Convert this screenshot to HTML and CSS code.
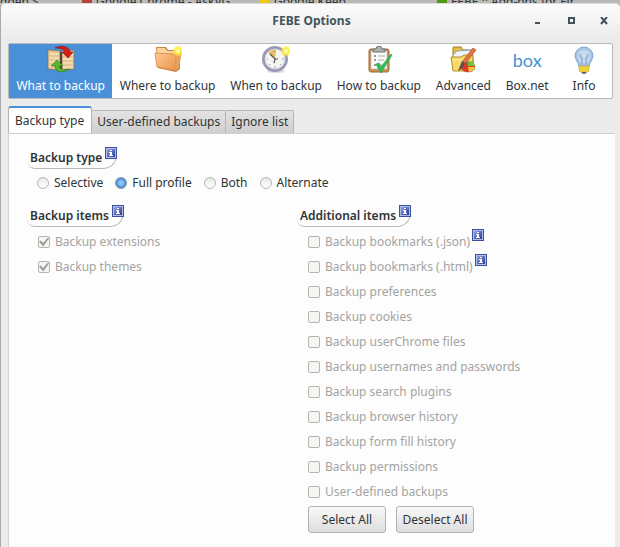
FILE: index.html
```html
<!DOCTYPE html>
<html lang="en">
<head>
<meta charset="utf-8">
<title>FEBE Options</title>
<link rel="stylesheet" href="styles.css">
</head>
<body>
<svg width="0" height="0" class="defs" aria-hidden="true">
  <defs>
    <linearGradient id="folder" x1="0" y1="0" x2="1" y2="1"><stop offset="0" stop-color="#ffc98c"/><stop offset="1" stop-color="#e8924a"/></linearGradient>
    <linearGradient id="blue" x1="0" y1="0" x2="1" y2="1"><stop offset="0" stop-color="#8fa3dc"/><stop offset="1" stop-color="#263a92"/></linearGradient>
    <radialGradient id="spark"><stop offset="0" stop-color="#fffde0"/><stop offset=".5" stop-color="#fbee3c"/><stop offset="1" stop-color="#fbe83c" stop-opacity="0"/></radialGradient>
    <symbol id="info" viewBox="0 0 12 12">
      <rect width="12" height="12" fill="#3b4fa4"/><rect x="1" y="1" width="10" height="10" fill="#b4bee4"/><rect x="2" y="2" width="8" height="8" fill="url(#blue)"/>
      <path d="M5 3h2v1H5zM5 5h2v3h1v1H4V8h1V6H4V5z" fill="#fff"/>
    </symbol>
  </defs>
</svg>
<div class="browser-tabs" aria-hidden="true">
  <span>dden S</span><span><b class="mark red"></b>Google Chrome - AskVG</span><span><b class="mark yellow"></b>Google Keep</span><span><b class="mark green"></b>FEBE :: Add-ons for Fir</span>
</div>
<main class="window">
  <header class="titlebar">
    <h1>FEBE Options</h1>
    <div class="controls">
      <button aria-label="Minimize"><svg viewBox="0 0 8 8"><path d="M1 5h5v2H1z"/></svg></button>
      <button aria-label="Maximize"><svg viewBox="0 0 8 8"><path fill-rule="evenodd" d="M1 0h7v7H1zM3 2v3h3V2z"/></svg></button>
      <button aria-label="Close"><svg viewBox="0 0 8 8"><path d="M1 0l6 7M7 0L1 7" stroke="#41545c" stroke-width="2"/></svg></button>
    </div>
  </header>
  <nav class="toolbar">
    <button class="active"><svg viewBox="0 0 28 28"><path d="M1 4l12 1v19L1 23zM15 5l12-1v19l-12 1z" fill="#e5c794" stroke="#8a6440" stroke-width=".6"/><path d="M2 8h10M2 12h10M2 16h10M2 20h8M16 9h10M16 13h10M16 17h10M16 21h10" stroke="#fff0c8"/><path d="M14 6v17" stroke="#4a2b1c" stroke-width="1.4"/><path d="M8 2C14-1 22 0 23 6h3l-5 6-6-6h3C17 3 13 2 8 2z" fill="#d91c16" stroke="#84100d" stroke-width=".6"/><path d="M22 23C16 28 8 26 8 20H4l6-6 6 6h-4c0 3 5 5 10 3z" fill="#58ba2b" stroke="#26741a" stroke-width=".6"/></svg>What to backup</button>
    <button><svg viewBox="0 0 28 28"><path d="M2 2q0-1 1-1h9l2 3h12v19l-4 3L4 22z" fill="#c98045"/><path d="M3 2h8l2 3h12v16H4z" fill="#ffd39d"/><path d="M1 7l19 1q2 0 2 2l-1 15L3 21z" fill="url(#folder)" stroke="#ce7c38" stroke-width=".7"/><path d="M22 9l6-4-3 17-4 3z" fill="#e6a05c"/><circle cx="24" cy="5" r="6" fill="url(#spark)"/></svg>Where to backup</button>
    <button><svg viewBox="0 0 28 28"><ellipse cx="14" cy="25" rx="9" ry="2" fill="#ddd"/><circle cx="13" cy="13" r="11.5" fill="#f4f4f2" stroke="#9a98b4" stroke-width="3"/><circle cx="13" cy="13" r="10" fill="none" stroke="#d2d1df"/><path d="M13 13L6 7q4-4 8-3z" fill="#e8bd61"/><path d="M13 5v1M13 20v2M5 13h1M20 13h2M18 18l1 1M7 19l1-1" stroke="#999"/><path d="M8 8l5 5h3M13 13l-1 4" fill="none" stroke="#555" stroke-width="1.2"/><circle cx="24" cy="5" r="6" fill="url(#spark)"/></svg>When to backup</button>
    <button><svg viewBox="0 0 28 28"><rect x="4" y="3" width="20" height="23" rx="2" fill="#cf9352" stroke="#9d6935"/><path d="M6 5h16v18H6z" fill="#fafafa" stroke="#aaa" stroke-width=".5"/><path d="M8 6V3h3q0-3 3-3t3 3h3v3z" fill="#aeb2ad" stroke="#757976"/><path d="M9 9h2v2H9zM9 13h2v2H9zM9 18h2v2H9z" fill="#999"/><path d="M13 10h7M13 14h6M13 19h5" stroke="#aaa"/><path d="M11 18l3-1 2 4L26 8l1 1-11 18q-3-4-5-9z" fill="#32bc55" stroke="#20a044" stroke-width=".6"/></svg>How to backup</button>
    <button><svg viewBox="0 0 28 28"><path d="M4 2q0-1 1-1h7l2 3h9v11H4z" fill="#e6bd3e" stroke="#9b7b28"/><path d="M4 9l4-4 15-1 2 15H5z" fill="#eef4fa" stroke="#91a5ba"/><path d="M2 11h10l3-2h9l-1 16H4z" fill="#f7d765" stroke="#b69235"/><path d="M4 14h15" stroke="#fff0a6"/><ellipse cx="19" cy="21" rx="7" ry="5" fill="#e03b29" stroke="#a33a22" stroke-width=".5"/><path d="M19 20v-5q6 0 7 5z" fill="#70c442"/><path d="M19 21h7q-1 4-6 5z" fill="#efc936"/><path d="M24 2l3 2-11 14-3-2z" fill="#e27443" stroke="#a54626" stroke-width=".6"/><path d="M13 15l3 2q-2 6-7 8 2-5 4-10z" fill="#5c5050"/></svg>Advanced</button>
    <button><span class="box-logo">box</span>Box.net</button>
    <button><svg viewBox="0 0 28 28"><path d="M14 1a9 9 0 0 0-9 9c0 4 4 6 4 11h10c0-5 4-7 4-11a9 9 0 0 0-9-9z" fill="#a9c5e4" stroke="#80a2cc"/><path d="M8 10q0-6 6-6 6 0 6 6 0 4-3 7h-6q-3-3-3-7z" fill="#c7dcf0"/><path d="M12 20v-8q-3-2-1-4M16 20v-8q3-2 1-4" fill="none" stroke="#8fabd0" stroke-width="1.5"/><path d="M9 20h10v4q0 2-2 2h-6q-2 0-2-2z" fill="#f0cf3c" stroke="#c3a12c" stroke-width=".5"/><path d="M11 26h6l-2 2h-2z" fill="#666"/></svg>Info</button>
  </nav>
  <div class="tabs" role="tablist">
    <button role="tab" class="selected" aria-selected="true">Backup type</button><button role="tab" aria-selected="false">User-defined backups</button><button role="tab" aria-selected="false">Ignore list</button>
  </div>
  <section class="panel">
    <h2>Backup type <svg class="info"><use href="#info"/></svg></h2>
    <div class="radios">
      <label><input type="radio" name="type">Selective</label>
      <label><input type="radio" name="type" checked>Full profile</label>
      <label><input type="radio" name="type">Both</label>
      <label><input type="radio" name="type">Alternate</label>
    </div>
    <div class="columns">
      <div>
        <h2>Backup items <svg class="info"><use href="#info"/></svg></h2>
        <div class="checks">
          <label><input type="checkbox" checked disabled>Backup extensions</label>
          <label><input type="checkbox" checked disabled>Backup themes</label>
        </div>
      </div>
      <div>
        <h2>Additional items <svg class="info"><use href="#info"/></svg></h2>
        <div class="checks">
          <label><input type="checkbox" disabled>Backup bookmarks (.json)<svg class="info"><use href="#info"/></svg></label>
          <label><input type="checkbox" disabled>Backup bookmarks (.html)<svg class="info"><use href="#info"/></svg></label>
          <label><input type="checkbox" disabled>Backup preferences</label>
          <label><input type="checkbox" disabled>Backup cookies</label>
          <label><input type="checkbox" disabled>Backup userChrome files</label>
          <label><input type="checkbox" disabled>Backup usernames and passwords</label>
          <label><input type="checkbox" disabled>Backup search plugins</label>
          <label><input type="checkbox" disabled>Backup browser history</label>
          <label><input type="checkbox" disabled>Backup form fill history</label>
          <label><input type="checkbox" disabled>Backup permissions</label>
          <label><input type="checkbox" disabled>User-defined backups</label>
        </div>
        <div class="actions"><button>Select All</button><button>Deselect All</button></div>
      </div>
    </div>
  </section>
</main>
</body>
</html>
```
FILE: styles.css
```css
* { box-sizing: border-box; }
html { height: 100%; }
body {
  margin: 0;
  min-height: 100%;
  display: flex;
  flex-direction: column;
  background: #b9b9b7;
  color: #2e3436;
  font: 12px/16px "Noto Sans", "Open Sans", sans-serif;
}
button { margin: 0; padding: 0; border: 0; background: none; color: inherit; font: inherit; white-space: nowrap; }
.defs { position: absolute; }

.browser-tabs {
  display: grid;
  grid-template: 100% / 75px 178px 177px 1fr;
  align-items: center;
  height: 3px;
  overflow: hidden;
  white-space: nowrap;
  line-height: 12px;
}
.browser-tabs span { display: flex; align-items: center; gap: 4px; padding-left: 7px; }
.browser-tabs span:first-child { padding-left: 0; }
.mark { width: 10px; height: 10px; }
.red { background: #b5443f; }
.yellow { background: #eecb0c; }
.green { background: #4c9b10; }

.window {
  flex: 1;
  display: flex;
  flex-direction: column;
  padding: 0 5px 0 7px;
  border-left: 1px solid #aaa;
  border-top: 1px solid #ddd;
  border-radius: 5px 5px 0 0;
  background: #ebebeb linear-gradient(#fcfcfc, #ebebeb) no-repeat top / 100% 36px;
}
.titlebar { display: grid; grid-template-columns: 1fr auto 1fr; align-items: center; height: 39px; padding-bottom: 6px; }
.titlebar h1 { grid-column: 2; margin: 0; font-size: 12px; font-weight: 700; color: #41545c; }
.controls { display: flex; justify-content: flex-end; gap: 25px; padding-right: 7px; }
.controls button { display: flex; }
.controls svg { width: 8px; height: 8px; fill: #41545c; }

.toolbar { display: flex; height: 56px; margin-right: 2px; border: 1px solid #b8b9b8; border-radius: 2px; background: #fff; }
.toolbar button { flex: 1 0 auto; display: flex; flex-direction: column; align-items: center; gap: 4px; min-width: 56px; padding: 2px 7px 0; }
.toolbar svg { width: 28px; height: 28px; }
.toolbar .active { background: #4a90d9; color: #fff; }
.box-logo { height: 28px; color: #4592cf; font: 18px/28px Lato, sans-serif; }

.tabs { display: flex; align-items: flex-end; height: 34px; }
.tabs button { height: 23px; padding: 0 5px; border: 1px solid #b5b5b5; border-width: 1px 1px 0 0; border-radius: 0 2px 0 0; background: linear-gradient(#e2e2e2, #cfcfcf); }
.tabs .selected { height: 27px; padding: 0 7px 0 6px; border-left-width: 1px; border-top: 2px solid #4a90d9; border-radius: 3px 3px 0 0; background: #fff; }

.panel { flex: 1; padding: 14px 18px 13px; border-top: 1px solid #cfcfcf; border-left: 1px solid #d2d2d2; background: #fdfdfd; }
.panel h2 {
  display: flex;
  gap: 3px;
  width: fit-content;
  height: 21px;
  margin: 0;
  padding: 2px 0 0 3px;
  border: 1px solid #bbb;
  border-width: 0 1px 1px 0;
  border-radius: 0 0 14px 8px;
  font-size: 12px;
  font-weight: 600;
}
.info { flex: none; width: 12px; height: 12px; }
h2 .info { margin: -3px -1px 0 0; }
.radios { display: flex; gap: 12px; margin: 6px 0 0 10px; }
label { display: flex; align-items: center; }
input { appearance: none; flex: none; margin: 0 5px 0 0; width: 12px; height: 12px; border: 1px solid #b4b6ae; background: #f5f5f3; }
input[type="radio"] { border-radius: 50%; background: linear-gradient(#e8e8e6, #fff); }
input[type="radio"]:checked { border-color: #8a949c; background: radial-gradient(#8cc0f8 2px, #4d95df 4px); }
input[type="checkbox"] { display: grid; place-items: center; border-radius: 2px; }
input[type="checkbox"]:checked::before {
  content: "";
  width: 10px;
  height: 9px;
  background: #999;
  clip-path: polygon(0 45%, 18% 32%, 40% 62%, 90% 0, 100% 12%, 42% 100%);
}
.columns { display: grid; grid-template-columns: 270px 1fr; margin-top: 15px; }
.checks { display: grid; gap: 9px; margin: 7px 0 0 11px; color: #a4a4a2; }
.checks .info { margin: -15px 0 0 2px; }
.actions { display: flex; gap: 10px; margin: 6px 0 0 11px; }
.actions button { min-width: 78px; height: 27px; padding: 0 4px; border: 1px solid #b2b2b0; border-radius: 3px; background: linear-gradient(#f8f8f8, #dedede); }
```
